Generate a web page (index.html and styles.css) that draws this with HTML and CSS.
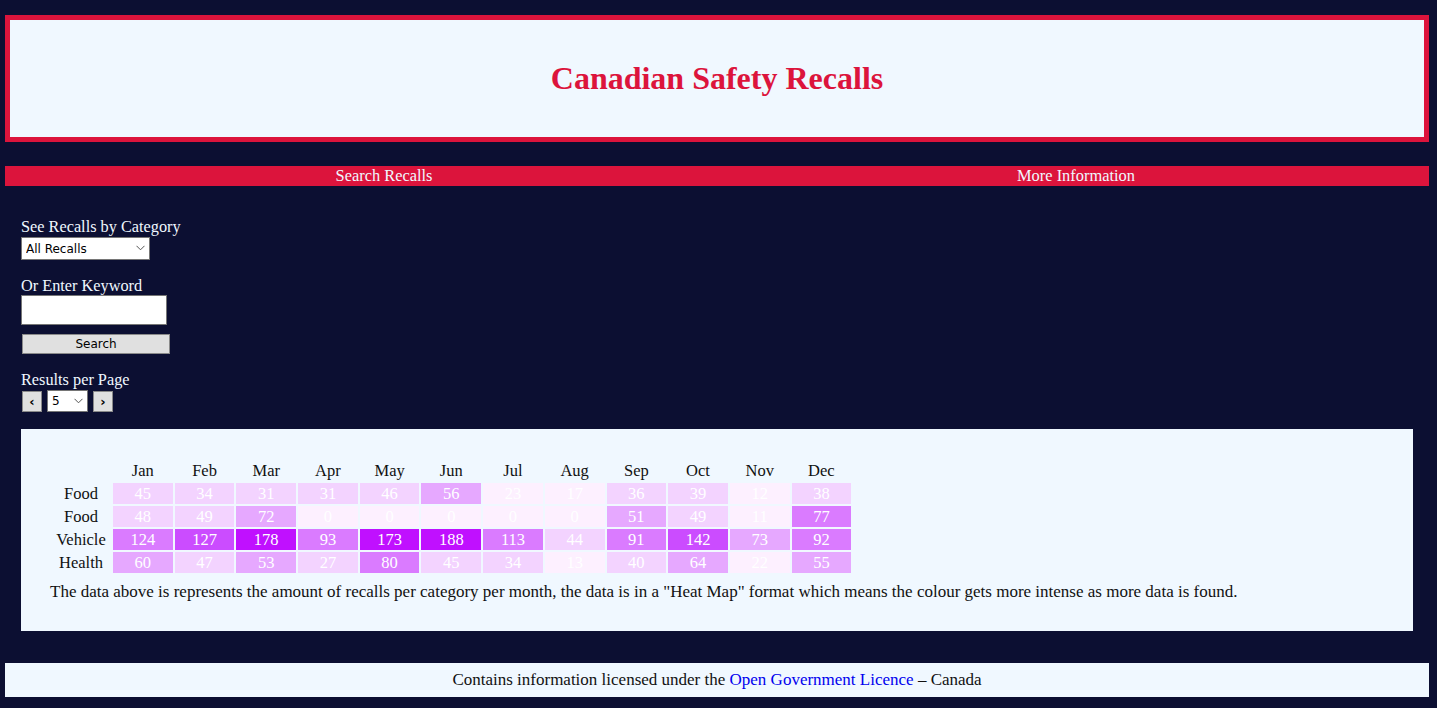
FILE: index.html
```html
<!DOCTYPE html>
<html lang="en">
<head>
<meta charset="utf-8">
<title>Canadian Safety Recalls</title>
<link rel="stylesheet" href="styles.css">
</head>
<body>
<header class="site-header">
  <h1 class="title">Canadian Safety Recalls</h1>
</header>
<nav class="nav">
  <a class="nav-item" href="#">Search Recalls</a>
  <a class="nav-item" href="#">More Information</a>
</nav>
<main class="main">
  <form class="filters">
    <label class="lbl" for="cat">See Recalls by Category</label>
    <span class="select-wrap cat-wrap">
      <select id="cat" class="sel cat-sel"><option>All Recalls</option></select>
      <svg class="chev" width="9" height="6" viewBox="0 0 9 6"><path d="M0.5 0.8 L4.5 4.8 L8.5 0.8" fill="none" stroke="#555" stroke-width="1"/></svg>
    </span>
    <label class="lbl lbl-gap" for="kw">Or Enter Keyword</label>
    <input id="kw" class="kw" type="text">
    <button type="button" class="btn search-btn">Search</button>
    <label class="lbl lbl-gap" for="per">Results per Page</label>
    <div class="pager">
      <button type="button" class="btn pg-btn">&#8249;</button>
      <span class="select-wrap per-wrap">
        <select id="per" class="sel per-sel"><option>5</option></select>
        <svg class="chev" width="9" height="6" viewBox="0 0 9 6"><path d="M0.5 0.8 L4.5 4.8 L8.5 0.8" fill="none" stroke="#555" stroke-width="1"/></svg>
      </span>
      <button type="button" class="btn pg-btn">&#8250;</button>
    </div>
  </form>

  <section class="panel">
    <table class="heat">
      <thead>
        <tr><th class="rl"></th><th>Jan</th><th>Feb</th><th>Mar</th><th>Apr</th><th>May</th><th>Jun</th><th>Jul</th><th>Aug</th><th>Sep</th><th>Oct</th><th>Nov</th><th>Dec</th></tr>
      </thead>
      <tbody>
        <tr><th class="rl">Food</th>
          <td class="l">45</td><td class="l">34</td><td class="l">31</td><td class="l">31</td><td class="l">46</td><td class="m">56</td><td class="vl">23</td><td class="vl">17</td><td class="l">36</td><td class="l">39</td><td class="vl">12</td><td class="l">38</td></tr>
        <tr><th class="rl">Food</th>
          <td class="l">48</td><td class="l">49</td><td class="m">72</td><td class="vl">0</td><td class="vl">0</td><td class="vl">0</td><td class="vl">0</td><td class="vl">0</td><td class="m">51</td><td class="l">49</td><td class="vl">11</td><td class="d1">77</td></tr>
        <tr><th class="rl">Vehicle</th>
          <td class="d1">124</td><td class="d2">127</td><td class="d3">178</td><td class="d1">93</td><td class="d3">173</td><td class="d3">188</td><td class="d1">113</td><td class="l">44</td><td class="d1">91</td><td class="d2">142</td><td class="m">73</td><td class="d1">92</td></tr>
        <tr><th class="rl">Health</th>
          <td class="m">60</td><td class="l">47</td><td class="m">53</td><td class="l">27</td><td class="d1">80</td><td class="l">45</td><td class="l">34</td><td class="vl">13</td><td class="l">40</td><td class="m">64</td><td class="vl">22</td><td class="m">55</td></tr>
      </tbody>
    </table>
    <p class="note">The data above is represents the amount of recalls per category per month, the data is in a "Heat Map" format which means the colour gets more intense as more data is found.</p>
  </section>
</main>
<footer class="footer">
  Contains information licensed under the <a class="link" href="#">Open Government Licence</a> &ndash; Canada
</footer>
</body>
</html>
```
FILE: styles.css
```css
html, body {
  background: #0c0f32;
}
body {
  margin: 0;
  padding: 15px 8px 11px 5px;
  font-family: "Liberation Serif", "DejaVu Serif", serif;
  font-size: 16.3px;
  color: #f0f8ff;
}
.site-header {
  background: #f0f8ff;
  border: 5px solid #dc143c;
  height: 117px;
  display: flex;
  align-items: center;
  justify-content: center;
}
.title {
  margin: 0;
  font-size: 32px;
  font-weight: bold;
  color: #dc143c;
}
.nav {
  margin-top: 24px;
  height: 20px;
  background: #dc143c;
  display: grid;
  grid-template-columns: 1fr 1fr;
  padding: 0 7px 0 33px;
}
.nav-item {
  color: #f0f8ff;
  text-decoration: none;
  text-align: center;
  line-height: 19px;
  font-size: 16.4px;
}
.main {
  padding: 0 16px;
}
.filters {
  display: flex;
  flex-direction: column;
  align-items: flex-start;
  padding-top: 32px;
}
.lbl {
  display: block;
  line-height: 17px;
  margin-bottom: 2px;
  color: #f0f8ff;
  font-size: 16.3px;
}
.lbl-gap {
  margin-top: 17px;
  margin-bottom: 1px;
}
.select-wrap {
  position: relative;
  display: inline-block;
}
.sel {
  appearance: none;
  -webkit-appearance: none;
  background: #fff;
  border: 1px solid #767676;
  border-radius: 0;
  font-family: "DejaVu Sans", "Liberation Sans", sans-serif;
  font-size: 12px;
  color: #000;
  margin: 0;
  padding: 0 0 0 4px;
  box-sizing: border-box;
}
.cat-sel {
  width: 129px;
  height: 23px;
}
.per-sel {
  width: 41px;
  height: 22px;
}
.chev {
  position: absolute;
  right: 5px;
  top: 8px;
  pointer-events: none;
}
.kw {
  margin: 0;
  width: 146px;
  height: 30px;
  box-sizing: border-box;
  border: 1px solid #767676;
  background: #fff;
}
.btn {
  background: #e0e0e0;
  border: 1px solid #8a8a8a;
  border-radius: 0;
  font-family: "DejaVu Sans", "Liberation Sans", sans-serif;
  font-size: 12px;
  color: #000;
  padding: 0;
  margin: 0;
  box-sizing: border-box;
}
.search-btn {
  margin-top: 9px;
  margin-left: 1px;
  width: 148px;
  height: 20px;
}
.pager {
  display: flex;
  align-items: center;
  gap: 5px;
  margin-top: 1px;
  margin-left: 1px;
}
.pg-btn {
  width: 20px;
  height: 21px;
  font-weight: bold;
  font-size: 13px;
  line-height: 17px;
}
.panel {
  margin-top: 17px;
  background: #f0f8ff;
  padding: 29px 28px 30px 28px;
  color: #111;
}
.heat {
  border-collapse: separate;
  border-spacing: 2px;
}
.heat th, .heat td {
  height: 21px;
  padding: 0;
  font-weight: normal;
  text-align: center;
  font-size: 16.5px;
  line-height: 19px;
}
.heat th {
  width: 59.7px;
  color: #111;
}
.heat th.rl {
  width: 60px;
}
.heat td {
  color: #fff;
  width: 59.7px;
}
.vl { background: #fdf0ff; }
.l  { background: #f3d3ff; }
.m  { background: #e6a8ff; }
.d1 { background: #da7bff; }
.d2 { background: #cb4cff; }
.d3 { background: #c010ff; }
.note {
  margin: 8px 0 0 1px;
  line-height: 18px;
  font-size: 17px;
}
.footer {
  margin-top: 32px;
  height: 34px;
  background: #f0f8ff;
  color: #111;
  text-align: center;
  line-height: 34px;
  font-size: 17px;
}
.link {
  color: #0000ee;
  text-decoration: none;
}
```
